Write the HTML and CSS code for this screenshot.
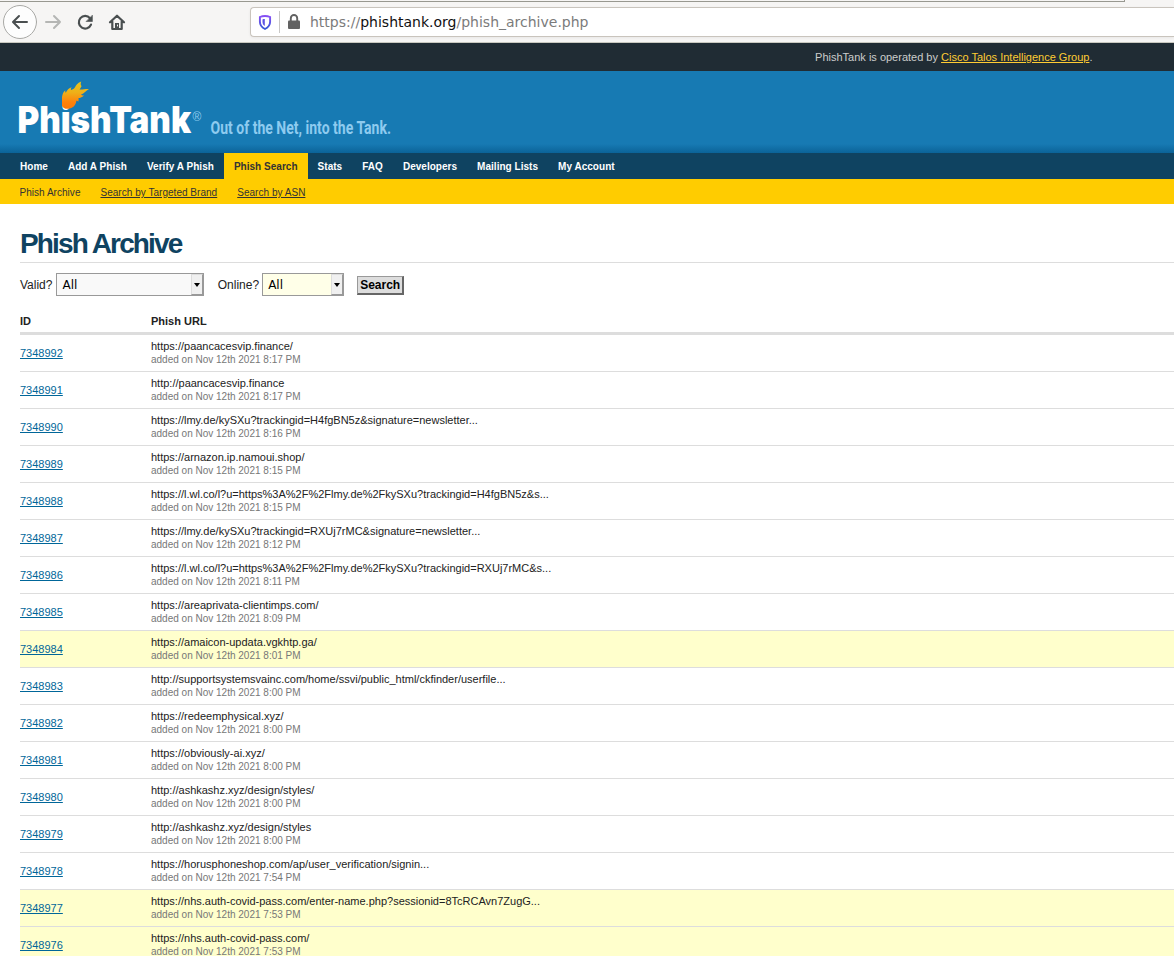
FILE: index.html
```html
<!DOCTYPE html>
<html lang="en">
<head>
<meta charset="utf-8">
<title>PhishTank &gt; Phish Archive</title>
<link rel="stylesheet" href="styles.css">
</head>
<body>
<div class="browser">
  <div class="tab-edge"></div>
  <div class="toolbar">
    <svg class="controls" width="140" height="40" viewBox="0 0 140 40" fill="none" stroke-linecap="round" stroke-linejoin="round" stroke-width="2">
      <circle cx="20" cy="20" r="16.5" fill="#fdfdfd" stroke="#a9a9a6" stroke-width="1"/>
      <path d="M27 20H13.2M19 14l-6 6 6 6" stroke="#4a4f50"/>
      <path d="M46 20h14M54 14l6 6-6 6" stroke="#b5b6b4"/>
      <path d="M90 16.200A6.300 6.300 0 1 0 91 22.600" stroke="#4a4f50" stroke-width="2.200"/>
      <path d="M92.400 13.500v6h-6z" fill="#4a4f50" stroke="#4a4f50" stroke-width=".6"/>
      <path d="M110 20.300l7-6.600 7 6.600M112.300 19.500v7.500h9.400v-7.500" stroke="#4a4f50" stroke-width="2.200"/>
      <path d="M115 27v-6h4v6z" fill="#4a4f50" stroke="none"/><path d="M117.500 23v1" stroke="#f6f5f4" stroke-width="1"/>
    </svg>
    <div class="urlbar">
      <svg width="54" height="28" viewBox="0 0 54 28" fill="none">
        <defs><linearGradient id="shield" x1="0" y1="0" x2="0" y2="1"><stop offset="0" stop-color="#8850f5"/><stop offset="1" stop-color="#3356d5"/></linearGradient></defs>
        <path d="M14 8c2.200 0 3.700.4 5.100 1v4.700c0 3.400-2.200 5.800-5.100 7.300-2.900-1.500-5.100-3.900-5.100-7.300V9c1.400-.6 2.900-1 5.100-1z" stroke="url(#shield)" stroke-width="1.900"/>
        <path d="M13.800 11c-1 0-1.700.1-2.300.4v2.500c0 1.800.9 3.200 2.300 4.100z" fill="#5d54e5"/>
        <path d="M28.500 3v22" stroke="#c9c8c6"/>
        <rect x="37" y="12.500" width="12" height="8.500" rx="1" fill="#626262"/>
        <path d="M39.800 13v-2.800a3.200 3.200 0 0 1 6.400 0v2.800" stroke="#626262" stroke-width="1.900"/>
      </svg>
      <span class="url">https://<b>phishtank.org</b>/phish_archive.php</span>
    </div>
  </div>
</div>
<div class="operator"><span>PhishTank is operated by <a href="#">Cisco Talos Intelligence Group</a>.</span></div>
<header class="banner">
  <svg width="420" height="82" viewBox="0 0 420 82">
    <defs><linearGradient id="flame" x1="0" y1="0" x2="0" y2="1"><stop offset="0" stop-color="#e9c51a"/><stop offset=".4" stop-color="#eeb018"/><stop offset=".75" stop-color="#ff820a"/><stop offset="1" stop-color="#fb7a08"/></linearGradient></defs>
    <text class="wordmark" x="17.500" y="62" textLength="173.500" lengthAdjust="spacingAndGlyphs">PhishTank</text>
    <path d="M62 35V26c.4-3 1.500-5.500 3.300-6.800-.2 1.200 0 2 .5 2.600 1-2.800 3.200-4.900 6-5.600-1 1.300-1.200 2-.7 2.700 1.700-.2 3-1.100 3.900-2.600 1-1.900 2.300-4.300 6.200-5.700-.7 2-.7 3.600.4 4.500-.5 1.400-1.200 2.300-2 3.300 2.600.5 4.900-.6 9.400-.4-3.300 1.800-4.500 4.500-8.100 5.700 1 .7 2.100.9 3.300.5-1.700 2-3.800 2.700-5.700 2.900.2 1.300.3 2.200-.3 3.700-.5-.9-1-1.200-1.800-1-.8 4.700-3.400 7.700-8.500 8-3.200.1-4.800-.8-5.900-2.800z" fill="url(#flame)"/>
    <text class="registered" x="192.500" y="50">®</text>
    <text class="tagline" x="210.500" y="62.500" textLength="180.500" lengthAdjust="spacingAndGlyphs">Out of the Net, into the Tank.</text>
  </svg>
</header>
<nav class="main-nav">
  <a href="#">Home</a><a href="#">Add A Phish</a><a href="#">Verify A Phish</a><a href="#" class="active">Phish Search</a><a href="#">Stats</a><a href="#">FAQ</a><a href="#">Developers</a><a href="#">Mailing Lists</a><a href="#">My Account</a>
</nav>
<nav class="sub-nav"><span>Phish Archive</span><a href="#">Search by Targeted Brand</a><a href="#">Search by ASN</a></nav>
<main>
  <h1>Phish Archive</h1>
  <form class="filters">
    <label>Valid?</label>
    <div class="select valid"><span>All</span><i></i></div>
    <label class="online-label">Online?</label>
    <div class="select online"><span>All</span><i></i></div>
    <button type="button">Search</button>
  </form>
  <div class="archive">
    <div class="head"><span>ID</span><span>Phish URL</span></div>
    <div class="row"><a href="#">7348992</a><div>https://paancacesvip.finance/<small>added on Nov 12th 2021 8:17 PM</small></div></div>
    <div class="row"><a href="#">7348991</a><div>http://paancacesvip.finance<small>added on Nov 12th 2021 8:17 PM</small></div></div>
    <div class="row"><a href="#">7348990</a><div>https://lmy.de/kySXu?trackingid=H4fgBN5z&amp;signature=newsletter...<small>added on Nov 12th 2021 8:16 PM</small></div></div>
    <div class="row"><a href="#">7348989</a><div>https://arnazon.ip.namoui.shop/<small>added on Nov 12th 2021 8:15 PM</small></div></div>
    <div class="row"><a href="#">7348988</a><div>https://l.wl.co/l?u=https%3A%2F%2Flmy.de%2FkySXu?trackingid=H4fgBN5z&amp;s...<small>added on Nov 12th 2021 8:15 PM</small></div></div>
    <div class="row"><a href="#">7348987</a><div>https://lmy.de/kySXu?trackingid=RXUj7rMC&amp;signature=newsletter...<small>added on Nov 12th 2021 8:12 PM</small></div></div>
    <div class="row"><a href="#">7348986</a><div>https://l.wl.co/l?u=https%3A%2F%2Flmy.de%2FkySXu?trackingid=RXUj7rMC&amp;s...<small>added on Nov 12th 2021 8:11 PM</small></div></div>
    <div class="row"><a href="#">7348985</a><div>https://areaprivata-clientimps.com/<small>added on Nov 12th 2021 8:09 PM</small></div></div>
    <div class="row flagged"><a href="#">7348984</a><div>https://amaicon-updata.vgkhtp.ga/<small>added on Nov 12th 2021 8:01 PM</small></div></div>
    <div class="row"><a href="#">7348983</a><div>http://supportsystemsvainc.com/home/ssvi/public_html/ckfinder/userfile...<small>added on Nov 12th 2021 8:00 PM</small></div></div>
    <div class="row"><a href="#">7348982</a><div>https://redeemphysical.xyz/<small>added on Nov 12th 2021 8:00 PM</small></div></div>
    <div class="row"><a href="#">7348981</a><div>https://obviously-ai.xyz/<small>added on Nov 12th 2021 8:00 PM</small></div></div>
    <div class="row"><a href="#">7348980</a><div>http://ashkashz.xyz/design/styles/<small>added on Nov 12th 2021 8:00 PM</small></div></div>
    <div class="row"><a href="#">7348979</a><div>http://ashkashz.xyz/design/styles<small>added on Nov 12th 2021 8:00 PM</small></div></div>
    <div class="row"><a href="#">7348978</a><div>https://horusphoneshop.com/ap/user_verification/signin...<small>added on Nov 12th 2021 7:54 PM</small></div></div>
    <div class="row flagged"><a href="#">7348977</a><div>https://nhs.auth-covid-pass.com/enter-name.php?sessionid=8TcRCAvn7ZugG...<small>added on Nov 12th 2021 7:53 PM</small></div></div>
    <div class="row flagged"><a href="#">7348976</a><div>https://nhs.auth-covid-pass.com/<small>added on Nov 12th 2021 7:53 PM</small></div></div>
  </div>
</main>
</body>
</html>
```
FILE: styles.css
```css
* { box-sizing: border-box; }
html, body { height: 956px; overflow: hidden; }
body { margin: 0; background: #fff; color: #222; font: 11px/13px "Liberation Sans", Arial, sans-serif; }

.browser { height: 43px; background: #f6f5f4; border-bottom: 1px solid #c9c9c0; }
.tab-edge { width: 1125px; height: 2px; border-bottom: 1px solid #989890; border-right: 1px solid #989890; }
.toolbar { display: flex; height: 40px; }
.controls { flex: none; width: 140px; }
.urlbar { display: flex; align-items: center; height: 30px; margin: 5px 0 0 110px; flex: 1; background: #fff; border: 1px solid #c9c4bd; border-right: 0; border-radius: 4px 0 0 4px; box-shadow: 0 1px 3px #0000000f; }
.urlbar svg { flex: none; }
.url { margin-left: 5px; color: #7b7b7b; font: 14px/20px "DejaVu Sans", sans-serif; white-space: nowrap; }
.url b { font-weight: 400; color: #111; }

.operator { height: 28px; padding: 8px 81.500px 0 0; background: #202c34; color: #ccc; text-align: right; }
.operator a { color: #fc3; }
.banner { height: 82px; background: linear-gradient(#177ab3 0, #177ab3 73px, #0b6398 82px); }
.banner svg { display: block; overflow: visible; }
.wordmark { font: 900 37.500px Inter, sans-serif; fill: #fff; }
.registered { font: 12px "Liberation Sans", sans-serif; fill: #8ecbef; }
.tagline { font: 700 17.500px Roboto, sans-serif; fill: #8ecbef; }

.main-nav { display: flex; height: 26px; padding-left: 10px; background: #0f4361; }
.main-nav a { padding: 7px 10px 0; color: #fff; font-size: 10px; font-weight: 700; letter-spacing: .03px; text-decoration: none; }
.main-nav .active { background: #fc0; color: #333; }
.sub-nav { display: flex; gap: 20px; height: 25px; padding: 7px 0 0 19.500px; background: #fc0; font-size: 10px; letter-spacing: .03px; color: #333; }
.sub-nav a { color: #333; }

main { padding: 22px 0 0 20px; }
h1 { height: 37px; margin: 0; border-bottom: 1px solid #ddd; color: #0f4361; font-size: 28px; line-height: 36px; letter-spacing: -1.870px; }
.filters { display: flex; height: 43px; padding-top: 10px; font-size: 12px; line-height: 24px; }
.select { display: flex; height: 23px; margin-left: 4px; border: 1px solid #999; color: #000; font: 12px/22px "DejaVu Sans", sans-serif; }
.select span { flex: 1; padding-left: 5px; }
.select i { display: flex; width: 12px; align-items: center; justify-content: center; background: #f0f0f0; border: 1px solid; border-width: 1px 1px 1px 1px; border-color: #ddd #999 #999 #ddd; }
.select i::after { content: ""; border: 3.500px solid transparent; border-top: 4px solid #000; border-bottom: 0; }
.valid { width: 148px; background: #f9f9f9; }
.online { width: 82px; margin-left: 3px; background: #ffffe8; }
.online-label { margin-left: 13.300px; }
.filters button { width: 47px; height: 19px; margin: 3px 0 0 13px; padding: 0; border: 2px solid; border-width: 1px 2px 2px 1px; border-color: #999 #666 #666 #999; background: #ddd; color: #000; font: 700 12px/14px "Liberation Sans", sans-serif; }

.head { display: grid; grid-template-columns: 131px 1fr; height: 29px; padding-top: 9px; border-bottom: 3px solid #ddd; font-weight: 700; }
.row { display: grid; grid-template-columns: 131px 1fr; align-items: center; height: 37px; border-bottom: 1px solid #ddd; }
.row a { color: #069; }
.row small { display: block; color: #777; font-size: 10px; }
.flagged { background: #ffc; }
```
